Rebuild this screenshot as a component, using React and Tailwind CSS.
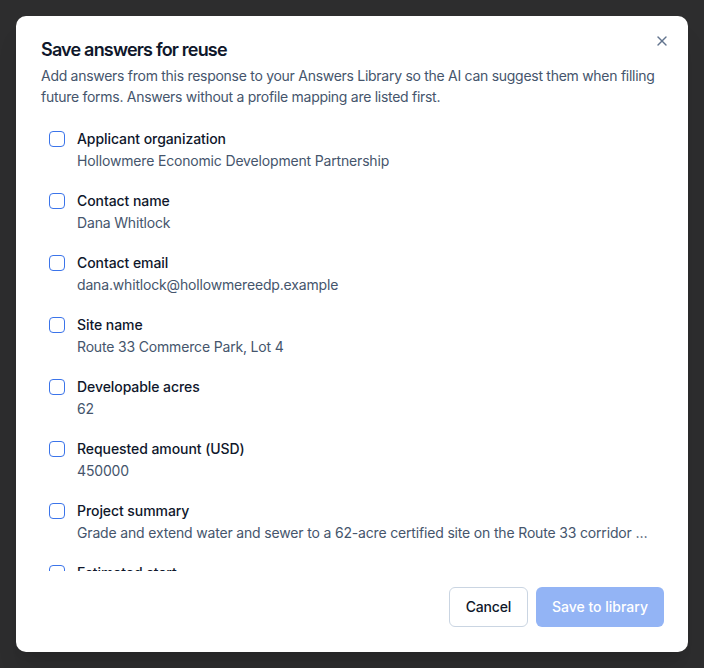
import { useState } from 'react';
import { X } from 'lucide-react';

const answers = [
    { label: 'Applicant organization', value: 'Hollowmere Economic Development Partnership' },
    { label: 'Contact name', value: 'Dana Whitlock' },
    { label: 'Contact email', value: 'dana.whitlock@hollowmereedp.example' },
    { label: 'Site name', value: 'Route 33 Commerce Park, Lot 4' },
    { label: 'Developable acres', value: '62' },
    { label: 'Requested amount (USD)', value: '450000' },
    { label: 'Project summary', value: 'Grade and extend water and sewer to a 62-acre certified site on the Route 33 corridor …' },
    { label: 'Estimated start', value: '2025-09-01' },
    { label: 'Estimated completion', value: '2026-12-31' },
];

function App() {
    const [selected, setSelected] = useState([]);

    const toggle = (i) => {
        setSelected(selected.includes(i) ? selected.filter(s => s !== i) : [...selected, i]);
    };

    return (
        <div className="min-h-screen bg-[#2d2d2e] p-4" style={{ fontFamily: 'Inter, "Noto Sans", sans-serif' }}>
            <div className="relative flex h-[636px] flex-col rounded-[10px] bg-white px-6 pt-[20px] pb-[25px] shadow-xl">
                <button className="absolute right-[18px] top-[17px] text-slate-500 hover:text-slate-700">
                    <X size={16} strokeWidth={2} />
                </button>

                <h2 className="pl-px text-lg leading-7 font-semibold tracking-[-0.045em] text-slate-900">
                    Save answers for reuse
                </h2>
                <p className="mt-px pl-px text-sm leading-[21px] tracking-[-0.02em] text-slate-600">
                    Add answers from this response to your Answers Library so the AI can suggest them when filling
                    future forms. Answers without a profile mapping are listed first.
                </p>

                <div className="mt-3 h-[452px] overflow-hidden">
                    {answers.map((a, i) => (
                        <label key={a.label} className="flex cursor-pointer items-start gap-3 py-2.5 pl-[9px] pr-1">
                            <input
                                type="checkbox"
                                checked={selected.includes(i)}
                                onChange={() => toggle(i)}
                                className="mt-0.5 h-4 w-4 shrink-0 appearance-none rounded-[4px] border border-[#3b74ea] bg-white checked:bg-[#2563eb]"
                            />
                            <div className="min-w-0 flex-1">
                                <div className="text-sm leading-5 font-medium tracking-[-0.005em] text-slate-900">{a.label}</div>
                                <div className="mt-0.5 truncate text-sm leading-5 tracking-[-0.012em] text-slate-600">{a.value}</div>
                            </div>
                        </label>
                    ))}
                </div>

                <div className="mt-4 flex justify-end gap-2">
                    <button className="h-10 rounded-md border border-slate-300 bg-white px-4 text-sm font-medium tracking-[-0.015em] text-slate-900">
                        Cancel
                    </button>
                    <button disabled className="h-10 rounded-md bg-[#93b4f5] px-4 text-sm font-medium text-white">
                        Save to library
                    </button>
                </div>
            </div>
        </div>
    );
}

export default App;
